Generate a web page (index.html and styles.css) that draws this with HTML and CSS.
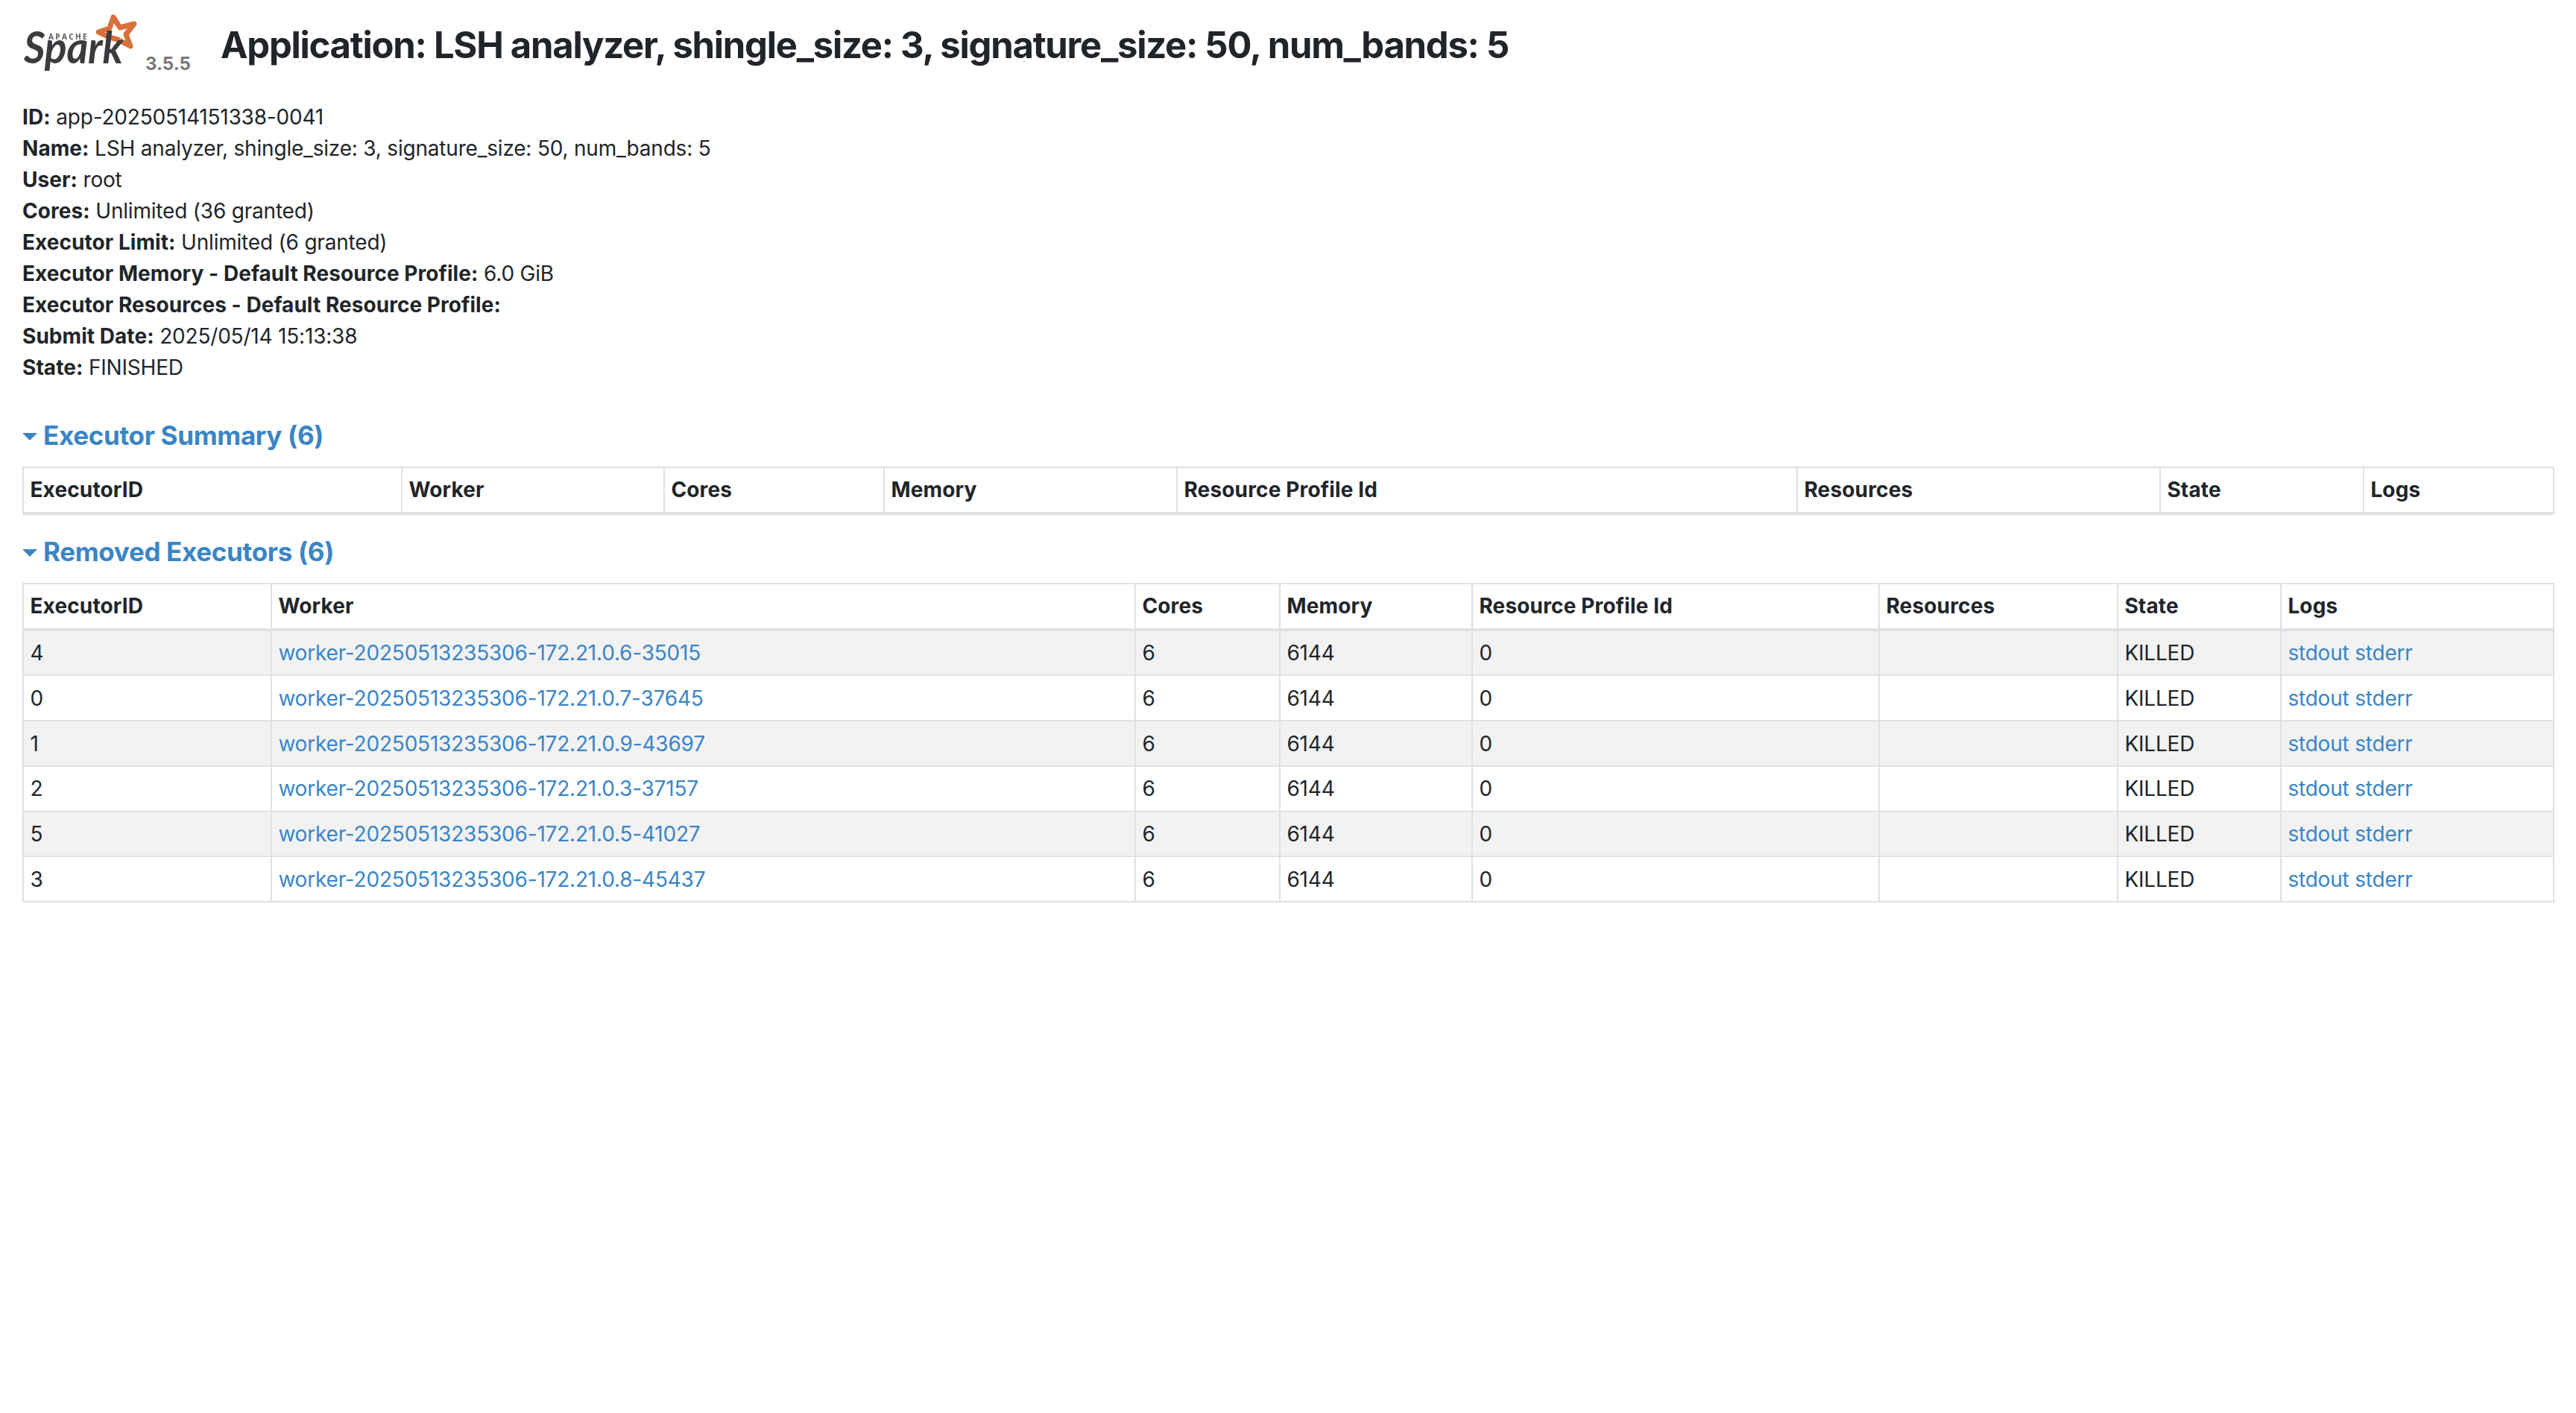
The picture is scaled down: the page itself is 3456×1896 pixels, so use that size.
FILE: index.html
```html
<!DOCTYPE html>
<html lang="en">
<head>
<meta charset="utf-8">
<title>Application: LSH analyzer</title>
<link rel="stylesheet" href="styles.css">
</head>
<body>
<div class="page">
  <header class="page-header">
    <svg class="logo" width="164" height="90" viewBox="30 14 164 90" aria-label="Apache Spark">
      <path class="logo-star" d="M152 23 L161 37 L180 32 L169 46 L175 62 L158 53 L147 50 L132 43 L147 38 Z"/>
      <text class="logo-apache" x="65" y="53">APACHE</text>
      <text class="logo-spark" x="32" y="85" textLength="133" lengthAdjust="spacingAndGlyphs">Spark</text>
    </svg>
    <span class="version">3.5.5</span>
    <h1 class="title">Application: LSH analyzer, shingle_size: 3, signature_size: 50, num_bands: 5</h1>
  </header>
  <ul class="info">
    <li><strong>ID:</strong> app-20250514151338-0041</li>
    <li><strong>Name:</strong> LSH analyzer, shingle_size: 3, signature_size: 50, num_bands: 5</li>
    <li><strong>User:</strong> root</li>
    <li><strong>Cores:</strong> Unlimited (36 granted)</li>
    <li><strong>Executor Limit:</strong> Unlimited (6 granted)</li>
    <li><strong>Executor Memory - Default Resource Profile:</strong> 6.0 GiB</li>
    <li><strong>Executor Resources - Default Resource Profile:</strong></li>
    <li><strong>Submit Date:</strong> 2025/05/14 15:13:38</li>
    <li><strong>State:</strong> FINISHED</li>
  </ul>

  <h2 class="section"><span class="arrow"></span>Executor Summary (6)</h2>
  <table class="grid grid-summary">
    <colgroup>
      <col class="s1"><col class="s2"><col class="s3"><col class="s4"><col class="s5"><col class="s6"><col class="s7"><col class="s8">
    </colgroup>
    <thead><tr><th>ExecutorID</th><th>Worker</th><th>Cores</th><th>Memory</th><th>Resource Profile Id</th><th>Resources</th><th>State</th><th>Logs</th></tr></thead>
  </table>

  <h2 class="section"><span class="arrow"></span>Removed Executors (6)</h2>
  <table class="grid grid-removed">
    <colgroup>
      <col class="r1"><col class="r2"><col class="r3"><col class="r4"><col class="r5"><col class="r6"><col class="r7"><col class="r8">
    </colgroup>
    <thead><tr><th>ExecutorID</th><th>Worker</th><th>Cores</th><th>Memory</th><th>Resource Profile Id</th><th>Resources</th><th>State</th><th>Logs</th></tr></thead>
    <tbody>
      <tr><td>4</td><td><a href="#">worker-20250513235306-172.21.0.6-35015</a></td><td>6</td><td>6144</td><td>0</td><td></td><td>KILLED</td><td><a href="#">stdout</a> <a href="#">stderr</a></td></tr>
      <tr><td>0</td><td><a href="#">worker-20250513235306-172.21.0.7-37645</a></td><td>6</td><td>6144</td><td>0</td><td></td><td>KILLED</td><td><a href="#">stdout</a> <a href="#">stderr</a></td></tr>
      <tr><td>1</td><td><a href="#">worker-20250513235306-172.21.0.9-43697</a></td><td>6</td><td>6144</td><td>0</td><td></td><td>KILLED</td><td><a href="#">stdout</a> <a href="#">stderr</a></td></tr>
      <tr><td>2</td><td><a href="#">worker-20250513235306-172.21.0.3-37157</a></td><td>6</td><td>6144</td><td>0</td><td></td><td>KILLED</td><td><a href="#">stdout</a> <a href="#">stderr</a></td></tr>
      <tr><td>5</td><td><a href="#">worker-20250513235306-172.21.0.5-41027</a></td><td>6</td><td>6144</td><td>0</td><td></td><td>KILLED</td><td><a href="#">stdout</a> <a href="#">stderr</a></td></tr>
      <tr><td>3</td><td><a href="#">worker-20250513235306-172.21.0.8-45437</a></td><td>6</td><td>6144</td><td>0</td><td></td><td>KILLED</td><td><a href="#">stdout</a> <a href="#">stderr</a></td></tr>
    </tbody>
  </table>
</div>
</body>
</html>
```

FILE: styles.css
```css
* { box-sizing: border-box; }
html, body { margin: 0; background: #fff; }
body {
  font-family: Inter, "Liberation Sans", sans-serif;
  font-size: 28px;
  line-height: 42px;
  color: #212529;
  letter-spacing: -.2px;
}
.page { padding: 0 30px; }
a { color: #3a85c6; text-decoration: none; }

.page-header { display: flex; align-items: flex-start; height: 136px; }
.logo { flex: none; display: block; margin-top: 14px; }
.logo-star { fill: none; stroke: #d8703a; stroke-width: 7; stroke-linejoin: round; filter: blur(.6px); }
.logo-apache { font: 700 10px "Open Sans", sans-serif; letter-spacing: 2.4px; fill: #55545a; filter: blur(.4px); }
.logo-spark { font: 700 60px Lato, sans-serif; font-style: italic; fill: #3c3a3e; filter: blur(.6px); }
.version { flex: none; margin: 65px 0 0 0; font-size: 24px; line-height: 42px; font-weight: 700; color: #777; width: 102px; padding-left: 1px; letter-spacing: 0; }
.title { margin: 30px 0 0; font-size: 49px; line-height: 62px; font-weight: 700; letter-spacing: -1.27px; }

.info { list-style: none; margin: 0; padding: 0; }
.info strong { font-weight: 700; letter-spacing: .05px; }

.section { margin: 0; font-size: 35px; line-height: 42px; font-weight: 700; letter-spacing: -.33px; color: #3a85c6; display: flex; align-items: center; height: 42px; }
.info + .section { margin-top: 49px; }
.grid + .section { margin-top: 28px; }
.arrow { width: 0; height: 0; border-left: 10px solid transparent; border-right: 10px solid transparent; border-top: 10px solid #3a85c6; margin-right: 8px; margin-top: 4px; }

.grid { width: 3395px; table-layout: fixed; border-collapse: collapse; margin-top: 21px; }
.grid th, .grid td { border: 2px solid #dee2e6; padding: 8.4px; text-align: left; vertical-align: top; }
.grid th { font-weight: 700; border-bottom-width: 4px; letter-spacing: .15px; }
.grid tbody tr:nth-child(odd) { background: #f2f2f3; }

.s1 { width: 508px; } .s2 { width: 352px; } .s3 { width: 295px; } .s4 { width: 393px; }
.s5 { width: 832px; } .s6 { width: 487px; } .s7 { width: 273px; } .s8 { width: 255px; }

.r1 { width: 333px; } .r2 { width: 1159px; } .r3 { width: 194px; } .r4 { width: 258px; }
.r5 { width: 546px; } .r6 { width: 320px; } .r7 { width: 219px; } .r8 { width: 366px; }
```
